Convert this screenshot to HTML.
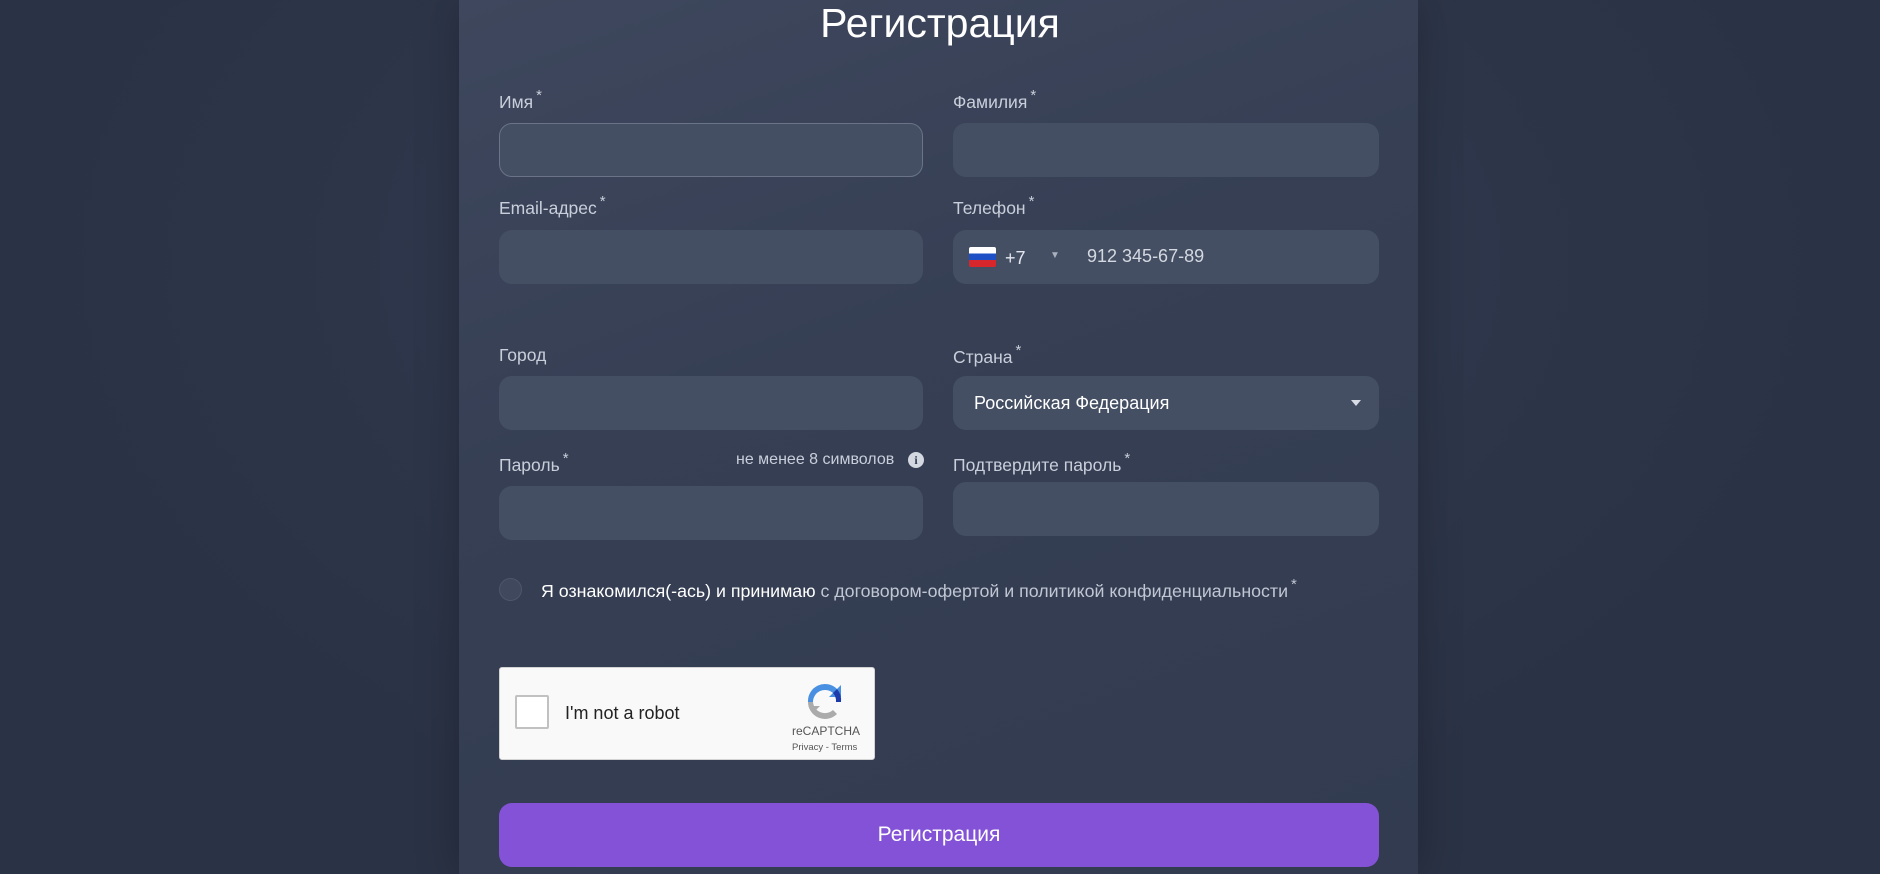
<!DOCTYPE html>
<html><head><meta charset="utf-8"><style>
*{box-sizing:border-box;margin:0;padding:0}
body{width:1880px;height:874px;overflow:hidden;background:radial-gradient(ellipse at 50% 30%,#323b50 0%,#2a3245 70%);font-family:"Liberation Sans","Noto Sans CJK SC",sans-serif;position:relative}
.card{position:absolute;left:459px;top:0;width:959px;height:874px;background:linear-gradient(160deg,#3e475d 0%,#363f54 40%,#323b50 100%);box-shadow:0 0 40px rgba(0,0,0,.25)}
.t{position:absolute;left:0;width:1880px;text-align:center;top:0;font-size:41px;color:#fff;line-height:46px}
.lbl{position:absolute;font-size:17.5px;color:#c9cfda;line-height:22px}
.lbl sup{font-size:15px;position:relative;top:-1px;margin-left:3px}
.in{position:absolute;height:54px;border-radius:13px;background:#454f64}
.L{left:499px;width:424px}.R{left:953px;width:426px}
</style></head><body>
<div class="card"></div>
<div class="t">Регистрация</div>
<div class="lbl" style="left:499px;top:86px">Имя<sup>*</sup></div>
<div class="lbl" style="left:953px;top:86px">Фамилия<sup>*</sup></div>
<div class="in L" style="top:123px;border:1px solid #6a7387"></div>
<div class="in R" style="top:123px"></div>
<div class="lbl" style="left:499px;top:192px">Email-адрес<sup>*</sup></div>
<div class="lbl" style="left:953px;top:192px">Телефон<sup>*</sup></div>
<div class="in L" style="top:230px"></div>
<div class="in R" style="top:230px">
 <div style="position:absolute;left:16px;top:17px;width:27px;height:20px;border-radius:2px;background:linear-gradient(#fff 0 33%,#1f4fc4 33% 66%,#d8262d 66%)"></div>
 <div style="position:absolute;left:52px;top:18px;color:#e4e7ee;font-size:18px">+7</div>
 <div style="position:absolute;left:97px;top:20px;color:#aab1be;font-size:10px">▼</div>
 <div style="position:absolute;left:134px;top:16px;color:#d4d8e0;font-size:18px">912 345-67-89</div>
</div>
<div class="lbl" style="left:499px;top:344px">Город</div>
<div class="lbl" style="left:953px;top:341px">Страна<sup>*</sup></div>
<div class="in L" style="top:376px"></div>
<div class="in R" style="top:376px"><div style="position:absolute;left:21px;top:17px;color:#fff;font-size:18px">Российская Федерация</div><div style="position:absolute;right:18px;top:24px;border:5px solid transparent;border-top:6px solid #d8dce4"></div></div>
<div class="lbl" style="left:499px;top:449px">Пароль<sup>*</sup></div>
<div class="lbl" style="left:736px;top:449px;font-size:16px">не менее 8 символов</div>
<div style="position:absolute;left:908px;top:452px;width:16px;height:16px;border-radius:50%;background:#d4d8e0;color:#363f54;font:bold 12px/16px 'Liberation Serif',serif;text-align:center">i</div>
<div class="lbl" style="left:953px;top:449px">Подтвердите пароль<sup>*</sup></div>
<div class="in L" style="top:486px"></div>
<div class="in R" style="top:482px"></div>
<div style="position:absolute;left:499px;top:578px;width:23px;height:23px;border-radius:50%;background:#3f485d;border:1px solid #4d566b"></div>
<div class="lbl" style="left:541px;top:575px;font-size:17.8px;color:#fff">Я ознакомился(-ась) и принимаю <span style="color:#c0c7d3">с договором-офертой и политикой конфиденциальности</span><sup style="color:#c0c7d3">*</sup></div>
<div style="position:absolute;left:499px;top:667px;width:376px;height:93px;background:#f9f9f9;border:1px solid #d3d3d3;border-radius:3px">
 <div style="position:absolute;left:15px;top:27px;width:34px;height:34px;border:2px solid #c1c1c1;border-radius:2px;background:#fff"></div>
 <div style="position:absolute;left:65px;top:35px;font-size:18px;color:#222">I'm not a robot</div>
 <svg style="position:absolute;left:305px;top:14px" width="40" height="40" viewBox="0 0 40 40"><path d="M8 20a12 12 0 0 1 20-9l-4 4h12V3l-4 4A17 17 0 0 0 3 20z" fill="#4a90e2"/><path d="M36 20h-5a12 12 0 0 0-3-9l4-4a17 17 0 0 1 4 13z" fill="#1c3aa9"/><path d="M8 20a12 12 0 0 0 20 8l4 4A17 17 0 0 1 3 20zM3 24h12l-4 4z" fill="#ababab"/></svg>
 <div style="position:absolute;left:292px;top:56px;font-size:12px;color:#555">reCAPTCHA</div>
 <div style="position:absolute;left:292px;top:74px;font-size:9.5px;color:#555">Privacy - Terms</div>
</div>
<div style="position:absolute;left:499px;top:803px;width:880px;height:64px;border-radius:13px;background:#8352d6;color:#fff;font-size:21px;text-align:center;line-height:64px">Регистрация</div>
</body></html>
